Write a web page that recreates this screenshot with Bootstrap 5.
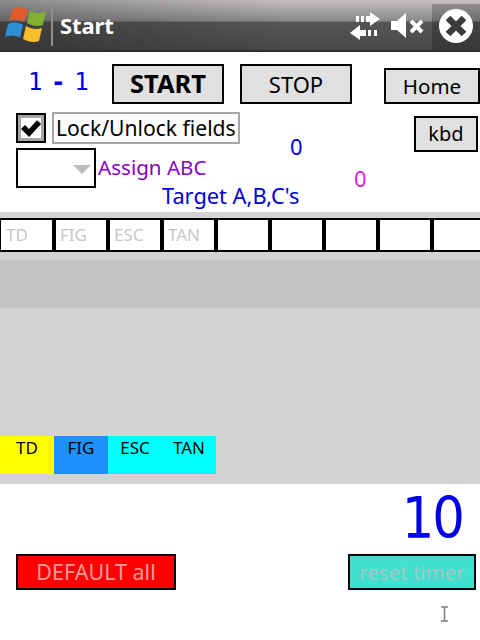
<!DOCTYPE html>
<html lang="en">
<head>
  <meta charset="UTF-8" />
  <meta name="viewport" content="width=device-width, initial-scale=1.0"/>
  <title>Start</title>
  <link href="https://cdn.jsdelivr.net/npm/bootstrap@5.3.0/dist/css/bootstrap.min.css" rel="stylesheet"/>
  <style>
    html, body { height: 100%; }
    body {
      width: 480px;
      height: 640px;
      overflow: hidden;
      background: #fff;
      font-family: "Noto Sans", "DejaVu Sans", sans-serif;
      color: #000;
    }

    /* title bar */
    .title-bar {
      height: 52px;
      border-bottom: 2px solid #2e2e2e;
      background:
        linear-gradient(90deg, rgba(0,0,0,.28), rgba(0,0,0,0) 60%),
        linear-gradient(180deg, #c4c0c3 0, #8a888a 21px, #565656 22px, #484848 49px);
    }
    .title-logo { margin-left: 4px; width: 44px; }
    .title-sep { width: 2px; height: 40px; margin: 6px 0 0 3px; background: #8f8f8f; }
    .title-text { margin: 0 0 0 7px; font-size: 22px; font-weight: 700; color: #fff; line-height: 50px; letter-spacing: -.1px; }
    .title-close { width: 48px; height: 46px; margin-top: 4px; background: rgba(0,0,0,.22); }

    /* buttons */
    .btn.win-btn {
      --bs-btn-padding-x: 0;
      --bs-btn-padding-y: 0;
      --bs-btn-border-radius: 0;
      --bs-btn-border-width: 2px;
      border: 2px solid #000;
      background: #e1e1e1;
      color: #000;
      font-size: 22px;
      line-height: 1;
    }
    .btn.btn-start { width: 112px; height: 40px; font-weight: 700; font-size: 25.5px; }
    .btn-stop { width: 112px; height: 40px; margin-left: 16px; }
    .btn.btn-home { width: 96px; height: 36px; margin: 4px 0 0 32px; font-size: 20.5px; }
    .btn.btn-kbd { width: 64px; height: 36px; margin: 12px 2px 0 auto; font-size: 20px; }
    .btn.btn-default-all { width: 160px; height: 36px; background: #f00; color: #f09c9c; font-size: 21.5px; }
    .btn.btn-reset { width: 128px; height: 36px; background: #40e0d0; color: #a9c6c4; font-size: 20.5px; }

    /* top form */
    .score-row { height: 52px; padding-top: 12px; }
    .score-text { width: 112px; padding: 0 0 0 28px; font-family: "DejaVu Sans Mono", monospace; font-size: 24px; line-height: 36px; color: #0000e0; letter-spacing: -2.9px; white-space: pre; }
    .score-dash { font-weight: 700; }
    .form-zone { height: 108px; }
    .form-left { width: 290px; padding: 8px 0 0 16px; }
    .lock-box { width: 30px; height: 30px; border: 2px solid #000; background: #fff; outline: 3px solid #a6a6a6; outline-offset: -5px; margin-top: 1px; }
    .lock-label { width: 188px; height: 32px; margin-left: 6px; padding-left: 2px; border: 2px solid #a6a6a6; font-size: 21.1px; line-height: 27px; white-space: nowrap; }
    .combo-box { width: 80px; height: 40px; margin-top: 4px; border: 2px solid #000; padding: 15px 0 0 55px; }
    .combo-arrow { width: 0; height: 0; border-left: 9px solid transparent; border-right: 9px solid transparent; border-top: 9px solid #bdbdbd; }
    .assign-text { margin: 3px 0 0 2px; font-size: 20.6px; line-height: 40px; color: #8a00c8; }
    .target-text { margin: -4px 0 0 146px; font-size: 21.8px; line-height: 24px; color: #0000e0; white-space: nowrap; }
    .zero-blue { margin: 27px 0 0 0; width: 48px; font-size: 22px; line-height: 30px; color: #0000e0; }
    .zero-pink { margin: 59px 0 0 0; font-size: 22px; line-height: 30px; color: #e020d8; padding-left: 16px; }

    /* grey play area */
    .play-zone { height: 272px; background: #d4d2d5; padding-top: 6px; }
    .field-row { height: 34px; border-top: 2px solid #000; border-bottom: 2px solid #000; background: #fff; }
    .field-cell { width: 54px; flex: none; border-left: 4px solid #000; padding-left: 4px; font-size: 17px; line-height: 29px; color: #c8c8c8; }
    .field-cell:first-child { width: 52px; border-left-width: 1px; padding-left: 5px; }
    .play-band { height: 48px; margin-top: 8px; background: #c4c2c5; }
    .play-space { height: 128px; }
    .tag-row { height: 38px; }
    .tag-cell { width: 54px; padding-top: 1px; text-align: center; font-size: 17px; line-height: 22px; color: #000; }
    .tag-yellow { background: #ff0; }
    .tag-blue { background: #1e90ff; }
    .tag-cyan { background: #0ff; }

    /* bottom */
    .bottom-zone { padding: 0 4px 0 16px; }
    .timer-text { height: 70px; padding: 2px 13px 0 0; text-align: right; font-family: "DejaVu Sans Condensed", "DejaVu Sans", sans-serif; font-stretch: condensed; font-size: 57px; letter-spacing: -2px; line-height: 64px; color: #0000e6; }
    .cursor-row { height: 50px; padding: 16px 0 0 0; }
    .cursor-mark { margin-left: 425px; }
  </style>
</head>
<body>

  <!-- title bar -->
  <div class="title-bar d-flex align-items-start">
    <svg class="title-logo" viewBox="0 0 44 44" width="44" height="44">
      <path d="M9 9 C14 6 19 7 24 10 L20 22 C15 19 10 19 5 21 Z" fill="#e2592a"/>
      <path d="M26 10 C31 14 37 14 42 11 L39 25 C34 27 28 26 23 23 Z" fill="#7fb02f"/>
      <path d="M4 24 C9 22 14 22 19 25 L16 38 C11 35 6 35 1 37 Z" fill="#2c8fd8"/>
      <path d="M22 26 C27 29 33 30 38 28 L35 41 C30 43 24 42 19 39 Z" fill="#f7bd2a"/>
    </svg>
    <div class="title-sep"></div>
    <div class="title-text">Start</div>
    <div class="ms-auto d-flex align-items-start">
      <svg class="d-block" width="32" height="32" viewBox="0 0 32 32" style="margin:10px 4px 0 0">
        <g fill="#fff">
          <rect x="7" y="6" width="3" height="6"/><rect x="12" y="6" width="3" height="6"/><rect x="17" y="6" width="5" height="6"/>
          <path d="M21 2 L31 9 L21 16 Z"/>
          <rect x="25" y="20" width="3" height="6"/><rect x="19" y="20" width="3" height="6"/><rect x="10" y="20" width="7" height="6"/>
          <path d="M11 15 L1 23 L11 30 Z"/>
        </g>
      </svg>
      <svg class="d-block" width="34" height="28" viewBox="0 0 34 28" style="margin:12px 8px 0 5px">
        <path d="M1 9 H7 L16 1 V26 L7 18 H1 Z" fill="#fff"/>
        <path d="M21 9 L32 20 M32 9 L21 20" stroke="#fff" stroke-width="4"/>
      </svg>
      <div class="title-close d-flex justify-content-center">
        <svg width="36" height="36" viewBox="0 0 36 36" style="margin-top:4px">
          <circle cx="18" cy="18" r="17" fill="#fff"/>
          <path d="M10 10 L26 26 M26 10 L10 26" stroke="#3a3a3a" stroke-width="6.5"/>
        </svg>
      </div>
    </div>
  </div>

  <!-- score and main buttons -->
  <div class="score-row d-flex align-items-start">
    <div class="score-text">1 <span class="score-dash">-</span> 1</div>
    <button class="btn win-btn btn-start">START</button>
    <button class="btn win-btn btn-stop">STOP</button>
    <button class="btn win-btn btn-home">Home</button>
  </div>

  <!-- lock, assign, targets -->
  <div class="form-zone d-flex align-items-start">
    <div class="form-left">
      <div class="d-flex">
        <div class="lock-box d-flex align-items-center justify-content-center">
          <svg width="20" height="18" viewBox="0 0 20 18"><path d="M2 8 L8 14 L18 3" fill="none" stroke="#000" stroke-width="5.5"/></svg>
        </div>
        <div class="lock-label">Lock/Unlock fields</div>
      </div>
      <div class="d-flex">
        <div class="combo-box"><div class="combo-arrow"></div></div>
        <div class="assign-text">Assign ABC</div>
      </div>
      <div class="target-text">Target A,B,C's</div>
    </div>
    <div class="zero-blue">0</div>
    <div class="zero-pink">0</div>
    <button class="btn win-btn btn-kbd">kbd</button>
  </div>

  <!-- fields -->
  <div class="play-zone">
    <div class="field-row d-flex overflow-hidden">
      <div class="field-cell">TD</div>
      <div class="field-cell">FIG</div>
      <div class="field-cell">ESC</div>
      <div class="field-cell">TAN</div>
      <div class="field-cell"></div>
      <div class="field-cell"></div>
      <div class="field-cell"></div>
      <div class="field-cell"></div>
      <div class="field-cell"></div>
    </div>
    <div class="play-band"></div>
    <div class="play-space"></div>
    <div class="tag-row d-flex">
      <div class="tag-cell tag-yellow">TD</div>
      <div class="tag-cell tag-blue">FIG</div>
      <div class="tag-cell tag-cyan">ESC</div>
      <div class="tag-cell tag-cyan">TAN</div>
    </div>
  </div>

  <!-- timer and bottom buttons -->
  <div class="bottom-zone">
    <div class="timer-text">10</div>
    <div class="d-flex justify-content-between">
      <button class="btn win-btn btn-default-all">DEFAULT all</button>
      <button class="btn win-btn btn-reset">reset timer</button>
    </div>
    <div class="cursor-row">
      <svg class="cursor-mark d-block" width="7" height="16" viewBox="0 0 7 16">
        <path d="M0 1 H7 M3.5 1 V15 M0 15 H7" stroke="#808080" stroke-width="1.6" fill="none"/>
      </svg>
    </div>
  </div>

  <script src="https://cdn.jsdelivr.net/npm/bootstrap@5.3.0/dist/js/bootstrap.bundle.min.js"></script>
</body>
</html>
